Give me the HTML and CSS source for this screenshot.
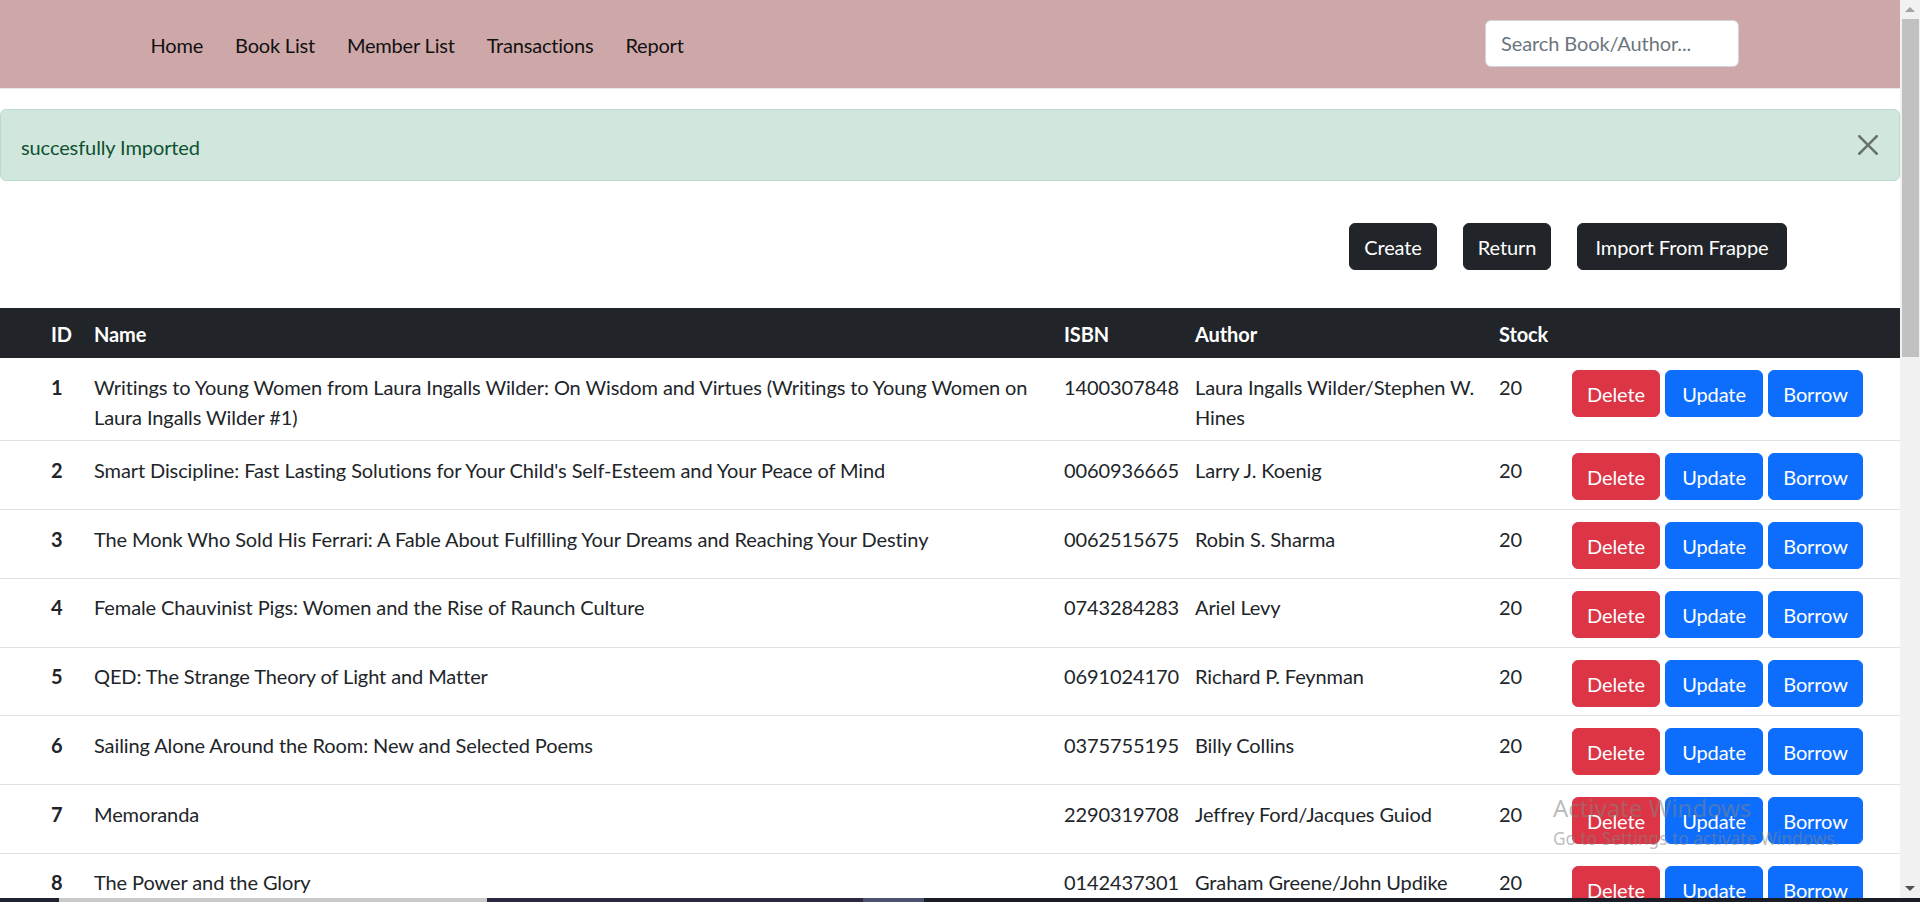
FILE: index.html
```html
<!DOCTYPE html>
<html lang="en">
<head>
<meta charset="utf-8">
<title>Book List</title>
<link rel="stylesheet" href="styles.css">
</head>
<body>
<div class="screen">
  <div class="viewport">
    <div class="page">
      <nav class="navbar">
        <ul class="nav-links">
          <li><a href="#">Home</a></li>
          <li><a href="#">Book List</a></li>
          <li><a href="#">Member List</a></li>
          <li><a href="#">Transactions</a></li>
          <li><a href="#">Report</a></li>
        </ul>
        <input class="search" type="text" placeholder="Search Book/Author...">
      </nav>

      <div class="alert">
        <span class="alert-text">succesfully Imported</span>
        <button class="close" aria-label="Close">
          <svg viewBox="0 0 16 16" width="20" height="20"><path d="M.293.293a1 1 0 0 1 1.414 0L8 6.586 14.293.293a1 1 0 1 1 1.414 1.414L9.414 8l6.293 6.293a1 1 0 0 1-1.414 1.414L8 9.414l-6.293 6.293a1 1 0 0 1-1.414-1.414L6.586 8 .293 1.707a1 1 0 0 1 0-1.414z"/></svg>
        </button>
      </div>

      <div class="toolbar">
        <button class="btn btn-dark btn-create">Create</button>
        <button class="btn btn-dark btn-return">Return</button>
        <button class="btn btn-dark btn-import">Import From Frappe</button>
      </div>

      <table class="books">
        <colgroup>
          <col class="c-id"><col class="c-name"><col class="c-isbn"><col class="c-author"><col class="c-stock"><col class="c-act">
        </colgroup>
        <thead>
          <tr><th>ID</th><th>Name</th><th>ISBN</th><th>Author</th><th>Stock</th><th></th></tr>
        </thead>
        <tbody>
          <tr>
            <td class="id">1</td>
            <td>Writings to Young Women from Laura Ingalls Wilder: On Wisdom and Virtues (Writings to Young Women on Laura Ingalls Wilder #1)</td>
            <td>1400307848</td><td>Laura Ingalls Wilder/Stephen W. Hines</td><td>20</td>
            <td><div class="actions"><button class="btn btn-danger btn-delete">Delete</button><button class="btn btn-primary btn-update">Update</button><button class="btn btn-primary btn-borrow">Borrow</button></div></td>
          </tr>
          <tr>
            <td class="id">2</td>
            <td>Smart Discipline: Fast Lasting Solutions for Your Child's Self-Esteem and Your Peace of Mind</td>
            <td>0060936665</td><td>Larry J. Koenig</td><td>20</td>
            <td><div class="actions"><button class="btn btn-danger btn-delete">Delete</button><button class="btn btn-primary btn-update">Update</button><button class="btn btn-primary btn-borrow">Borrow</button></div></td>
          </tr>
          <tr>
            <td class="id">3</td>
            <td>The Monk Who Sold His Ferrari: A Fable About Fulfilling Your Dreams and Reaching Your Destiny</td>
            <td>0062515675</td><td>Robin S. Sharma</td><td>20</td>
            <td><div class="actions"><button class="btn btn-danger btn-delete">Delete</button><button class="btn btn-primary btn-update">Update</button><button class="btn btn-primary btn-borrow">Borrow</button></div></td>
          </tr>
          <tr>
            <td class="id">4</td>
            <td>Female Chauvinist Pigs: Women and the Rise of Raunch Culture</td>
            <td>0743284283</td><td>Ariel Levy</td><td>20</td>
            <td><div class="actions"><button class="btn btn-danger btn-delete">Delete</button><button class="btn btn-primary btn-update">Update</button><button class="btn btn-primary btn-borrow">Borrow</button></div></td>
          </tr>
          <tr>
            <td class="id">5</td>
            <td>QED: The Strange Theory of Light and Matter</td>
            <td>0691024170</td><td>Richard P. Feynman</td><td>20</td>
            <td><div class="actions"><button class="btn btn-danger btn-delete">Delete</button><button class="btn btn-primary btn-update">Update</button><button class="btn btn-primary btn-borrow">Borrow</button></div></td>
          </tr>
          <tr>
            <td class="id">6</td>
            <td>Sailing Alone Around the Room: New and Selected Poems</td>
            <td>0375755195</td><td>Billy Collins</td><td>20</td>
            <td><div class="actions"><button class="btn btn-danger btn-delete">Delete</button><button class="btn btn-primary btn-update">Update</button><button class="btn btn-primary btn-borrow">Borrow</button></div></td>
          </tr>
          <tr>
            <td class="id">7</td>
            <td>Memoranda</td>
            <td>2290319708</td><td>Jeffrey Ford/Jacques Guiod</td><td>20</td>
            <td><div class="actions"><button class="btn btn-danger btn-delete">Delete</button><button class="btn btn-primary btn-update">Update</button><button class="btn btn-primary btn-borrow">Borrow</button></div></td>
          </tr>
          <tr>
            <td class="id">8</td>
            <td>The Power and the Glory</td>
            <td>0142437301</td><td>Graham Greene/John Updike</td><td>20</td>
            <td><div class="actions"><button class="btn btn-danger btn-delete">Delete</button><button class="btn btn-primary btn-update">Update</button><button class="btn btn-primary btn-borrow">Borrow</button></div></td>
          </tr>
        </tbody>
      </table>
    </div>

    <div class="scrollbar">
      <span class="sb-btn"><span class="tri up"></span></span>
      <span class="sb-thumb"></span>
      <span class="sb-track"></span>
      <span class="sb-btn"><span class="tri down"></span></span>
    </div>

    <div class="watermark">
      <div class="wm-title">Activate Windows</div>
      <div class="wm-sub">Go to Settings to activate Windows.</div>
    </div>
  </div>
  <div class="taskbar">
    <span class="tb tb-1"></span><span class="tb tb-2"></span><span class="tb tb-3"></span><span class="tb tb-4"></span><span class="tb tb-5"></span>
  </div>
</div>
</body>
</html>
```

FILE: styles.css
```css
html, body {
  margin: 0;
  padding: 0;
  height: 100%;
  overflow: hidden;
  background: #fff;
}

.screen {
  display: flex;
  flex-direction: column;
  height: 902px;
}

.viewport {
  flex: 1;
  min-height: 0;
  display: flex;
  position: relative;
  overflow: hidden;
}

.page {
  flex: 1;
  min-width: 0;
  overflow: hidden;
  font-family: Lato, "Noto Sans", sans-serif;
  font-size: 20px;
  line-height: 30px;
  letter-spacing: -0.1px;
  color: #212529;
}

/* navbar */
.navbar {
  height: 88px;
  background: #cea8a9;
  border-bottom: 1px solid #e9e9e9;
  display: flex;
  align-items: center;
  padding: 0 161px 0 134.6px;
}

.nav-links {
  display: flex;
  list-style: none;
  margin: 0;
  padding: 0;
}

.nav-links a {
  display: block;
  padding: 1px 16px 0;
  color: #111;
  text-decoration: none;
  font-size: 20px;
  line-height: 30px;
  letter-spacing: -0.2px;
}

.search {
  margin-left: auto;
  margin-bottom: 2px;
  width: 254px;
  height: 47px;
  box-sizing: border-box;
  border: 1px solid #ced4da;
  border-radius: 6px;
  padding: 0 15px;
  font-family: inherit;
  font-size: 20px;
  letter-spacing: -0.1px;
  color: #212529;
  background: #fff;
  outline: none;
}

.search::placeholder {
  color: #6c757d;
}

/* alert */
.alert {
  margin: 20px 0;
  height: 72px;
  box-sizing: border-box;
  padding: 0 21px 0 20px;
  border: 1px solid #badbcc;
  border-radius: 6px;
  background: #d1e7dd;
  color: #0f5132;
  display: flex;
  align-items: center;
  justify-content: space-between;
}

.alert-text {
  padding-top: 4px;
}

.close {
  border: 0;
  background: transparent;
  padding: 0;
  width: 20px;
  height: 20px;
  display: flex;
  opacity: 0.5;
}

.close path {
  fill: #000;
}

/* toolbar */
.toolbar {
  display: flex;
  justify-content: flex-end;
  gap: 26px;
  padding: 22px 113px 38px 0;
}

.btn {
  height: 47px;
  box-sizing: border-box;
  padding: 1px 0 0;
  border: 1px solid transparent;
  border-radius: 6px;
  font-family: inherit;
  font-size: 20px;
  line-height: 44px;
  letter-spacing: -0.1px;
  text-align: center;
  color: #fff;
  cursor: pointer;
  white-space: nowrap;
}

.btn-create { width: 88px; }
.btn-return { width: 88px; }
.btn-import { width: 210px; }
.btn-delete { width: 88px; }
.btn-update { width: 98px; }
.btn-borrow { width: 95px; }

.btn-dark {
  background: #212529;
  border-color: #212529;
}

.btn-danger {
  background: #dc3545;
  border-color: #dc3545;
}

.btn-primary {
  background: #0d6efd;
  border-color: #0d6efd;
}

/* table */
.books {
  width: 100%;
  table-layout: fixed;
  border-collapse: collapse;
}

.c-id { width: 84px; }
.c-name { width: 970px; }
.c-isbn { width: 131px; }
.c-author { width: 304px; }
.c-stock { width: 73px; }
.c-act { width: 338px; }

.books th {
  background: #212529;
  color: #fff;
  font-weight: 700;
  text-align: left;
  padding: 11px 10px 9px;
  line-height: 30px;
}

.books th:first-child,
.books td.id {
  padding-left: 51px;
}

.books td {
  padding: 13.5px 10px 8.75px;
  vertical-align: top;
  border-bottom: 1px solid #dee2e6;
}

.books td.id {
  font-weight: 700;
}

.actions {
  display: flex;
  gap: 5px;
  margin-top: -1.5px;
}

/* scrollbar */
.scrollbar {
  width: 20px;
  flex: none;
  background: #f1f1f1;
  display: flex;
  flex-direction: column;
  align-items: center;
}

.sb-btn {
  height: 19px;
  width: 20px;
  display: flex;
  align-items: center;
  justify-content: center;
  flex: none;
}

.sb-thumb {
  width: 17px;
  height: 338px;
  background: #c1c1c1;
  flex: none;
}

.sb-track {
  flex: 1;
}

.tri {
  width: 0;
  height: 0;
  border-left: 5px solid transparent;
  border-right: 5px solid transparent;
}

.tri.up {
  border-bottom: 5px solid #a3a3a3;
}

.tri.down {
  border-top: 5px solid #505050;
}

/* watermark */
.watermark {
  position: absolute;
  left: 1553px;
  top: 792px;
  font-family: "Noto Sans", "Open Sans", sans-serif;
  color: rgba(130, 130, 130, 0.55);
  pointer-events: none;
}

.wm-title {
  font-size: 24px;
  line-height: 32px;
}

.wm-sub {
  margin-top: 4px;
  font-size: 17.3px;
  line-height: 22px;
}

/* taskbar strip */
.taskbar {
  height: 4px;
  display: flex;
  flex: none;
}

.tb { height: 4px; display: block; }
.tb-1 { width: 59px; background: #1f2230; }
.tb-2 { width: 428px; background: #c9c9c9; }
.tb-3 { width: 376px; background: #2b2740; }
.tb-4 { width: 61px; background: #4a5270; }
.tb-5 { flex: 1; background: #1b1d26; }
```
